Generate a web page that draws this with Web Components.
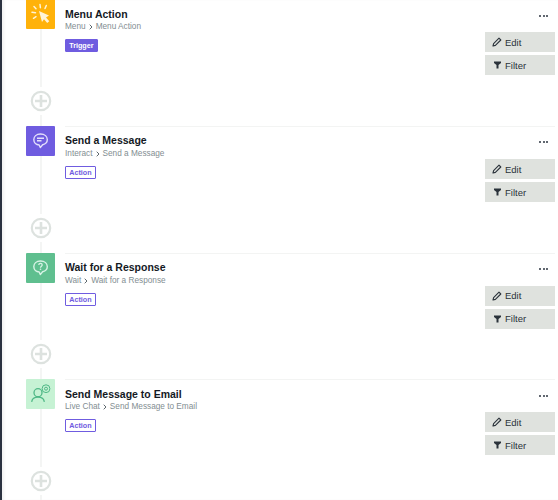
<!DOCTYPE html>
<html>
<head>
<meta charset="utf-8">
<title>Flow</title>
<style>
  html, body { margin: 0; height: 500px; overflow: hidden; background: #fff; }
  body { font-family: "Liberation Sans", Arial, sans-serif; }
</style>
</head>
<body>
<flow-page>
  <flow-step title-text="Menu Action" app="Menu" tag="Trigger" tag-style="solid" tile="#ffb20a" first>
    <svg slot="icon" viewBox="0 0 29 30" width="29" height="30" fill="none">
      <path d="M13 12 L23 16.5 L20 18.5 L23.3 22.3 L21.2 24 L18 20.2 L16 23 Z" fill="#fff3d6"/>
      <path d="M14 5.5 L14.4 8.7 M8 7.5 L10 9.7 M6 13.3 L9.5 13.7 M7.5 19.3 L10 17.7 M20.3 6.5 L19 9.5" stroke="#fff3d6" stroke-width="1.5" stroke-linecap="round"/>
    </svg>
  </flow-step>
  <flow-step title-text="Send a Message" app="Interact" tag="Action" tile="#6f5ce0">
    <svg slot="icon" viewBox="0 0 29 30" width="29" height="30" fill="none">
      <path d="M14.5 8 C10.3 8 7.8 10.6 7.8 13.6 C7.8 16.8 10.3 18.9 13.2 19 L14.3 21.6 L16.6 18.8 C19.3 18.2 21.3 16.2 21.3 13.6 C21.3 10.6 18.8 8 14.5 8 Z" stroke="#e4e0fb" stroke-width="1.4" stroke-linejoin="round"/>
      <path d="M11 12.3 H18 M11 14.7 H15.5" stroke="#e4e0fb" stroke-width="1.4"/>
    </svg>
  </flow-step>
  <flow-step title-text="Wait for a Response" app="Wait" tag="Action" tile="#5fbf8f">
    <svg slot="icon" viewBox="0 0 29 30" width="29" height="30" fill="none">
      <path d="M14.5 8 C10.3 8 7.8 10.6 7.8 13.6 C7.8 16.8 10.3 18.9 13.2 19 L14.3 21.6 L16.6 18.8 C19.3 18.2 21.3 16.2 21.3 13.6 C21.3 10.6 18.8 8 14.5 8 Z" stroke="#d9f3e6" stroke-width="1.4" stroke-linejoin="round"/>
      <path d="M12.8 12 C12.8 11 13.6 10.4 14.5 10.4 C15.5 10.4 16.2 11.1 16.2 12 C16.2 13.2 14.5 13.3 14.5 14.8" stroke="#d9f3e6" stroke-width="1.3"/>
      <circle cx="14.5" cy="16.3" r="0.8" fill="#d9f3e6"/>
    </svg>
  </flow-step>
  <flow-step title-text="Send Message to Email" app="Live Chat" tag="Action" tile="#c6f2d4">
    <svg slot="icon" viewBox="0 0 29 30" width="29" height="30" fill="none" stroke="#4fb886">
      <circle cx="12" cy="13.7" r="4" stroke-width="1.3"/>
      <path d="M5.8 22.4 C6.2 19.5 8.8 18.2 12 18.2 C15.2 18.2 17.8 19.5 18.2 22.4" stroke-width="1.3" stroke-linecap="round"/>
      <circle cx="20" cy="9.7" r="3.9" stroke-width="1"/>
      <circle cx="20" cy="9.7" r="1.5" stroke-width="1"/>
    </svg>
  </flow-step>
</flow-page>

<template id="step-tpl">
  <style>
    :host { display: flex; height: 126.66px; }
    .rail { width: 29px; margin-left: 24px; display: flex; flex-direction: column; align-items: center; flex: none; }
    .tile { width: 29px; height: 30px; flex: none; background: var(--tile); border-radius: 1px; }
    .tile ::slotted(svg) { display: block; }
    .line { width: 2px; background: #f4f5f4; margin-left: 1px; }
    .line.top { flex: 1; }
    .line.bottom { height: 11px; }
    .plus { flex: none; margin: 3px 0 3px 1px; display: block; }
    .main { flex: 1; margin-left: 10px; margin-right: 3px; padding-top: 6.4px; display: flex; justify-content: space-between; border-top: 1px solid #f3f4f3; min-width: 0; }
    :host([first]) .main { border-top-color: transparent; }
    .title { font-size: 10.5px; line-height: 14px; font-weight: 700; color: #14191f; }
    .crumb { font-size: 8.25px; line-height: 12px; margin-top: .6px; color: #838e92; display: flex; align-items: center; gap: 3px; }
    .crumb svg { display: block; }
    .tag { display: inline-block; margin-top: 5.9px; font-size: 7.2px; line-height: 11px; font-weight: 700; padding: 0 3.2px; border: 1px solid #6f5ce0; border-radius: 1px; color: #6f5ce0; }
    .tag.solid { background: #6f5ce0; color: #fff; }
    .side { width: 70px; display: flex; flex-direction: column; align-items: stretch; }
    .more { align-self: flex-end; margin: 8px 7px 14.7px 0; height: 3px; display: flex; gap: 1.5px; }
    .more i { width: 2px; height: 2px; border-radius: 50%; background: #2c3440; }
  </style>
  <div class="rail">
    <div class="tile"><slot name="icon"></slot></div>
    <div class="line top"></div>
    <svg class="plus" width="22" height="22" viewBox="0 0 22 22" fill="none" stroke="#dde2df">
      <circle cx="11" cy="11" r="9.2" stroke-width="2.2"/>
      <path d="M11 5 V17 M5 11 H17" stroke-width="2.6"/>
    </svg>
    <div class="line bottom"></div>
  </div>
  <div class="main">
    <div>
      <div class="title"></div>
      <div class="crumb"><span class="app"></span>
        <svg width="4" height="6" viewBox="0 0 4 6" fill="none" stroke="#5d686d" stroke-width="1"><path d="M.7.7 3 3 .7 5.3"/></svg>
        <span class="name"></span></div>
      <span class="tag"></span>
    </div>
    <div class="side">
      <div class="more"><i></i><i></i><i></i></div>
      <step-button>
        <svg slot="icon" width="10" height="10" viewBox="0 0 10 10" fill="none" stroke="#2a323a"><path d="M1 9 L1.6 6.6 L7 1.2 L8.8 3 L3.4 8.4 Z" stroke-width="1.1" stroke-linejoin="round"/></svg>
        Edit
      </step-button>
      <step-button>
        <svg slot="icon" width="7" height="8" viewBox="0 0 7 8" fill="#2a323a"><path d="M0 .5 H7 V2 L4.5 4 V7.5 H2.5 V4 L0 2 Z"/></svg>
        Filter
      </step-button>
    </div>
  </div>
</template>

<template id="button-tpl">
  <style>
    :host { display: flex; align-items: center; gap: 3px; height: 20px; margin-bottom: 3px; padding-left: 7px; background: #dfe2de; color: #2a323a; font-size: 9.5px; cursor: pointer; }
    ::slotted(svg) { display: block; }
    .icon { width: 10px; display: flex; justify-content: center; }
  </style>
  <span class="icon"><slot name="icon"></slot></span>
  <slot></slot>
</template>

<script>
class FlowPage extends HTMLElement {
  constructor() {
    super();
    this.attachShadow({ mode: 'open' });
    this.shadowRoot.innerHTML = `
      <style>
        :host { display: block; height: 500px; overflow: hidden; border-left: 2px solid #2b3240; box-sizing: border-box; box-shadow: inset 3px 0 3px -1px rgba(0,0,0,.06); }
        .inner { margin-top: -0.66px; }
      </style>
      <div class="inner"><slot></slot></div>
    `;
  }
}

class FlowStep extends HTMLElement {
  constructor() {
    super();
    this.attachShadow({ mode: 'open' });
    const tpl = document.getElementById('step-tpl');
    this.shadowRoot.appendChild(tpl.content.cloneNode(true));
  }

  connectedCallback() {
    const title = this.getAttribute('title-text');
    this.style.setProperty('--tile', this.getAttribute('tile'));
    this.shadowRoot.querySelector('.title').textContent = title;
    this.shadowRoot.querySelector('.app').textContent = this.getAttribute('app');
    this.shadowRoot.querySelector('.name').textContent = title;
    const tag = this.shadowRoot.querySelector('.tag');
    tag.textContent = this.getAttribute('tag');
    if (this.getAttribute('tag-style') === 'solid') tag.classList.add('solid');
  }
}

class StepButton extends HTMLElement {
  constructor() {
    super();
    this.attachShadow({ mode: 'open' });
    const tpl = document.getElementById('button-tpl');
    this.shadowRoot.appendChild(tpl.content.cloneNode(true));
  }
}

customElements.define('step-button', StepButton);
customElements.define('flow-step', FlowStep);
customElements.define('flow-page', FlowPage);
</script>
</body>
</html>
